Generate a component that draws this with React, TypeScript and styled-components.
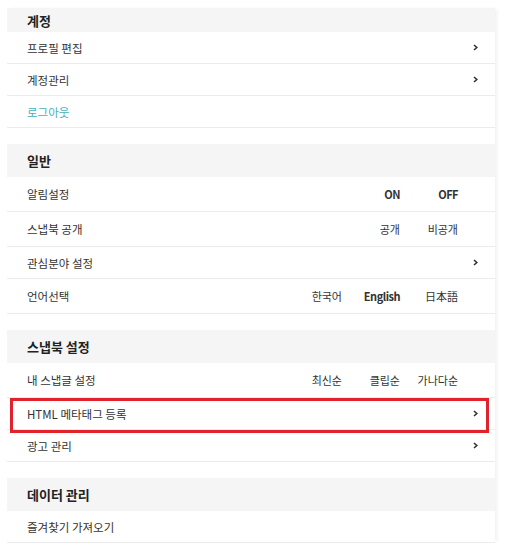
import styled, { createGlobalStyle } from "styled-components";

const GlobalStyle = createGlobalStyle`
  html, body {
    margin: 0;
    background: #ffffff;
  }
  body {
    padding: 8px 0 0 7px;
    font-family: "Noto Sans CJK KR", "Noto Sans", sans-serif;
    color: #333;
  }
`;

type Item = {
  label: string;
  options?: string[];
  arrow?: boolean;
  accent?: boolean;
  highlight?: boolean;
};

type Group = {
  title: string;
  items: Item[];
};

const groups: Group[] = [
  {
    title: "계정",
    items: [
      { label: "프로필 편집", arrow: true },
      { label: "계정관리", arrow: true },
      { label: "로그아웃", accent: true },
    ],
  },
  {
    title: "일반",
    items: [
      { label: "알림설정", options: ["ON", "OFF"] },
      { label: "스냅북 공개", options: ["공개", "비공개"] },
      { label: "관심분야 설정", arrow: true },
      { label: "언어선택", options: ["한국어", "English", "日本語"] },
    ],
  },
  {
    title: "스냅북 설정",
    items: [
      { label: "내 스냅글 설정", options: ["최신순", "클립순", "가나다순"] },
      { label: "HTML 메타태그 등록", arrow: true, highlight: true },
      { label: "광고 관리", arrow: true },
    ],
  },
  {
    title: "데이터 관리",
    items: [{ label: "즐겨찾기 가져오기" }],
  },
];

const Chevron = () => (
  <svg width="5" height="7" viewBox="0 0 5 7">
    <polyline
      points="1,1 3.8,3.5 1,6"
      fill="none"
      stroke="#333"
      strokeWidth="1.6"
    />
  </svg>
);

const App = () => {
  return (
    <>
      <GlobalStyle />
      <Panel>
        {groups.map((group, gi) => (
          <Section key={group.title} $last={gi === groups.length - 1}>
            <Header $first={gi === 0}>{group.title}</Header>
            {group.items.map((item) => (
              <Row
                key={item.label}
                $tall={!!item.options}
                $highlight={!!item.highlight}
              >
                <Label $accent={!!item.accent}>{item.label}</Label>
                {item.options && (
                  <Options>
                    {item.options.map((o) => (
                      <Option key={o} $latin={/^[A-Za-z]/.test(o)}>
                        {o}
                      </Option>
                    ))}
                  </Options>
                )}
                {item.arrow && (
                  <Arrow>
                    <Chevron />
                  </Arrow>
                )}
              </Row>
            ))}
          </Section>
        ))}
      </Panel>
    </>
  );
};

const Arrow = styled.span`
  display: flex;
  align-items: center;
  margin-right: 17px;
`;
const Option = styled.span<{ $latin: boolean }>`
  width: 58px;
  text-align: right;
  font-size: 11px;
  font-weight: ${(p) => (p.$latin ? 600 : 400)};
  letter-spacing: ${(p) => (p.$latin ? "-0.5px" : "0")};
  color: #333;
`;
const Options = styled.div`
  display: flex;
  margin-right: 37px;
`;
const Label = styled.span<{ $accent: boolean }>`
  font-size: 11.5px;
  color: ${(p) => (p.$accent ? "#3fb1ba" : "#333")};
`;
const Row = styled.div<{ $tall: boolean; $highlight: boolean }>`
  position: relative;
  z-index: ${(p) => (p.$highlight ? 1 : 0)};
  box-sizing: border-box;
  height: ${(p) => (p.$tall ? "35px" : "32px")};
  display: flex;
  align-items: center;
  justify-content: space-between;
  padding-left: 20px;
  border-bottom: 1px solid #ececec;
  background: #fff;

  ${(p) =>
    p.$highlight &&
    `
    &::after {
      content: "";
      position: absolute;
      left: 3px;
      right: 6px;
      top: 0;
      bottom: -4px;
      border: 3px solid #e1222c;
      pointer-events: none;
    }
  `}
`;
const Header = styled.div<{ $first: boolean }>`
  box-sizing: border-box;
  height: ${(p) => (p.$first ? "24px" : "33px")};
  display: flex;
  align-items: center;
  padding-left: 20px;
  background: #f5f5f5;
  font-size: 13px;
  font-weight: 700;
  color: #222;
`;
const Section = styled.section<{ $last: boolean }>`
  display: flex;
  flex-direction: column;
  padding-bottom: ${(p) => (p.$last ? "0" : "16px")};
`;
const Panel = styled.div`
  width: 488px;
  display: flex;
  flex-direction: column;
  background: #fff;
  box-shadow: 3px 0 4px -1px rgba(0, 0, 0, 0.06);
`;

export default App;
